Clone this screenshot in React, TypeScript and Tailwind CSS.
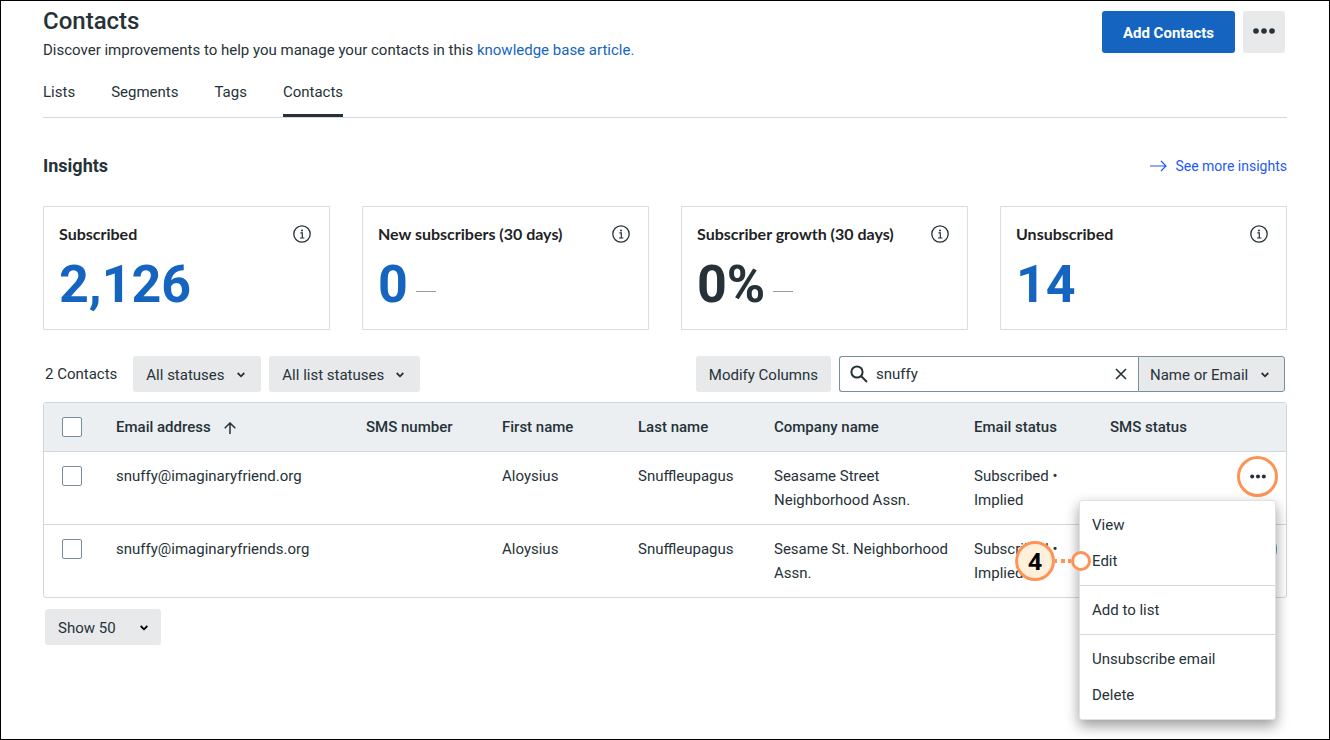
import type { ReactNode } from "react";
import clsx from "clsx";

interface Stat {
  title: string;
  value: string;
  trend?: boolean;
  dark?: boolean;
}

interface Contact {
  email: string;
  firstName: string;
  lastName: string;
  company: string;
}

const tabs = ["Lists", "Segments", "Tags", "Contacts"];

const stats: Stat[] = [
  { title: "Subscribed", value: "2,126" },
  { title: "New subscribers (30 days)", value: "0", trend: true },
  { title: "Subscriber growth (30 days)", value: "0%", trend: true, dark: true },
  { title: "Unsubscribed", value: "14" },
];

const contacts: Contact[] = [
  {
    email: "snuffy@imaginaryfriend.org",
    firstName: "Aloysius",
    lastName: "Snuffleupagus",
    company: "Seasame Street Neighborhood Assn.",
  },
  {
    email: "snuffy@imaginaryfriends.org",
    firstName: "Aloysius",
    lastName: "Snuffleupagus",
    company: "Sesame St. Neighborhood Assn.",
  },
];

const menuGroups = [["View", "Edit"], ["Add to list"], ["Unsubscribe email", "Delete"]];

const Dots = ({ className }: { className: string }) => (
  <svg viewBox="0 0 22 6" fill="currentColor" className={className} aria-hidden="true">
    <circle cx="3" cy="3" r="2.8" />
    <circle cx="11" cy="3" r="2.8" />
    <circle cx="19" cy="3" r="2.8" />
  </svg>
);

const InfoIcon = () => (
  <svg viewBox="0 0 18 18" fill="none" stroke="currentColor" className="size-[18px]" aria-hidden="true">
    <circle cx="9" cy="9" r="8.2" strokeWidth="1.3" />
    <path d="M7.4 7.9h1.9v5M7 13h4.4" strokeWidth="1.2" />
    <circle cx="9" cy="5.4" r="1" fill="currentColor" stroke="none" />
  </svg>
);

interface DropdownProps {
  label: string;
  value: string;
  className?: string;
  selectClassName?: string;
  iconClassName?: string;
}

const Dropdown = ({ label, value, className, selectClassName, iconClassName }: DropdownProps) => (
  <div className={clsx("relative", className)}>
    <select
      aria-label={label}
      className={clsx("h-9 w-full appearance-none bg-[#e8e9eb] pt-px", selectClassName)}
    >
      <option>{value}</option>
    </select>
    <svg
      viewBox="0 0 8 6"
      fill="none"
      stroke="currentColor"
      strokeWidth="1.8"
      className={clsx("pointer-events-none absolute top-4 h-[6px] w-2", iconClassName)}
      aria-hidden="true"
    >
      <path d="M0.7 1l3.3 3.3L7.3 1" />
    </svg>
  </div>
);

const StatCard = ({ title, value, trend, dark }: Stat) => (
  <section className="border border-[#dcdddf] px-[15px] pt-[15px] pb-[14px]">
    <div className="flex h-6 items-center justify-between pr-[3px]">
      <h3 className="font-['Lato'] text-base leading-6 font-bold text-[#1f2326]">{title}</h3>
      <button type="button" aria-label={`About ${title}`}>
        <InfoIcon />
      </button>
    </div>
    <div className="mt-[9px] flex items-center gap-2">
      <span className={clsx("text-[52px] leading-[60px] font-bold", dark ? "text-[#263238]" : "text-[#1565c0]")}>
        {value}
      </span>
      {trend && <span className="mt-3 h-px w-5 bg-[#9a9a9a]" />}
    </div>
  </section>
);

/* Numbered callout that points at a menu item */
const Callout = ({ step }: { step: number }) => (
  <div className="pointer-events-none absolute top-1/2 right-[184px] flex -translate-y-1/2 items-center">
    <span className="flex size-10 items-center justify-center rounded-full border-[3px] border-[#ff9356] bg-[#fff0dc] font-['Noto_Sans'] text-2xl font-bold text-black">
      {step}
    </span>
    <svg viewBox="0 0 16 4" className="h-1 w-4" fill="#ff9356" aria-hidden="true">
      <path d="M0 0h2v4H0zM6 0h4v4H6zM13 0h3v4h-3z" />
    </svg>
    <span className="size-5 rounded-full border-[3px] border-[#ff9356] bg-white" />
  </div>
);

const RowMenu = () => (
  <div
    role="menu"
    className="absolute top-12 right-[10px] z-10 w-[197px] rounded-[3px] border border-[#dfe1e3] bg-white shadow-[0_6px_14px_rgba(0,0,0,0.4)]"
  >
    {menuGroups.map((group) => (
      <div key={group[0]} className="border-[#cfd8dc] py-[6px] not-first:border-t">
        {group.map((item) => (
          <div key={item} className="relative">
            <button type="button" role="menuitem" className="block h-9 w-full px-3 text-left">
              {item}
            </button>
            {item === "Edit" && <Callout step={4} />}
          </div>
        ))}
      </div>
    ))}
  </div>
);

const Th = ({ children, className }: { children?: ReactNode; className?: string }) => (
  <th className={clsx("bg-[#ebeff2] px-3 py-3 text-left align-top font-medium", className)}>{children}</th>
);

const Td = ({ children, className }: { children?: ReactNode; className?: string }) => (
  <td className={clsx("border-t border-[#cfd8dc] px-3 py-3 align-top", className)}>{children}</td>
);

const RowCheckbox = ({ label }: { label: string }) => (
  <input
    type="checkbox"
    aria-label={label}
    className="mx-[6px] mt-[2px] block size-5 appearance-none rounded-[2px] border border-[#78909c] bg-white"
  />
);

const ContactsTable = () => (
  <div className="mt-[10px] rounded-[3px] border border-[#cfd8dc]">
    <table className="w-full table-fixed border-separate border-spacing-0">
      <colgroup>
        <col className="w-[60px]" />
        <col />
        <col className="w-[136px]" />
        <col className="w-[136px]" />
        <col className="w-[136px]" />
        <col className="w-[200px]" />
        <col className="w-[136px]" />
        <col className="w-[136px]" />
        <col className="w-[52px]" />
      </colgroup>
      <thead>
        <tr>
          <Th className="rounded-tl-[2px]">
            <RowCheckbox label="Select all contacts" />
          </Th>
          <Th>
            <button type="button" className="flex items-center gap-[13px]">
              Email address
              <svg
                viewBox="0 0 12 12"
                fill="none"
                stroke="currentColor"
                strokeWidth="1.5"
                className="mt-[2px] size-3"
                aria-hidden="true"
              >
                <path d="M6 12V1M0.7 6.3L6 1l5.3 5.3" />
              </svg>
            </button>
          </Th>
          <Th>SMS number</Th>
          <Th>First name</Th>
          <Th>Last name</Th>
          <Th>Company name</Th>
          <Th>Email status</Th>
          <Th>SMS status</Th>
          <Th className="rounded-tr-[2px]" />
        </tr>
      </thead>
      <tbody>
        {contacts.map((contact, i) => (
          <tr key={contact.email}>
            <Td>
              <RowCheckbox label={`Select ${contact.email}`} />
            </Td>
            <Td>{contact.email}</Td>
            <Td />
            <Td>{contact.firstName}</Td>
            <Td>{contact.lastName}</Td>
            <Td>{contact.company}</Td>
            <Td>Subscribed • Implied</Td>
            <Td />
            <Td className="relative">
              <button
                type="button"
                aria-label={`Actions for ${contact.email}`}
                className={clsx(
                  "absolute flex items-center justify-center rounded-full",
                  i === 0
                    ? "top-1 left-[3px] size-[41px] border-[3px] border-[#ff9356]"
                    : "top-[5px] left-[5px] size-[38px] bg-[#4f97bd]",
                )}
              >
                <Dots className="h-[5px] w-4" />
              </button>
              {i === 0 && <RowMenu />}
            </Td>
          </tr>
        ))}
      </tbody>
    </table>
  </div>
);

export default function App() {
  return (
    <main className="min-h-screen border border-black bg-white px-[42px] pt-2 font-['Roboto',sans-serif] text-[15px] leading-6 text-[#263238]">
      <header className="flex items-start justify-between">
        <div>
          <h1 className="text-2xl leading-6 font-medium">Contacts</h1>
          <p className="mt-[5px]">
            Discover improvements to help you manage your contacts in this{" "}
            <a href="#" className="text-[#1565c0]">
              knowledge base article.
            </a>
          </p>
        </div>
        <div className="mt-[2px] mr-[2px] flex gap-2">
          <button type="button" className="h-[42px] rounded-[3px] bg-[#1565c0] px-[21px] pt-[2px] font-bold text-white">
            Add Contacts
          </button>
          <button
            type="button"
            aria-label="More actions"
            className="flex size-[42px] items-center justify-center rounded-[3px] bg-[#e8e9eb] pb-[2px]"
          >
            <Dots className="h-[6px] w-[22px]" />
          </button>
        </div>
      </header>

      <nav className="mt-[18px] flex gap-9 border-b border-[#cfd8dc]">
        {tabs.map((tab) => (
          <a
            key={tab}
            href="#"
            className={clsx("border-b-[3px] pb-[10px]", tab === "Contacts" ? "border-[#263238]" : "border-transparent")}
          >
            {tab}
          </a>
        ))}
      </nav>

      <div className="mt-9 flex items-center justify-between">
        <h2 className="text-lg leading-6 font-bold">Insights</h2>
        <a href="#" className="flex items-center gap-2 text-[14px] text-[#1f5af0]">
          <svg
            viewBox="0 0 17 12"
            fill="none"
            stroke="currentColor"
            strokeWidth="1.2"
            className="h-3 w-[17px]"
            aria-hidden="true"
          >
            <path d="M0 6h16M11 1l5 5-5 5" />
          </svg>
          See more insights
        </a>
      </div>

      <div className="mt-7 grid grid-cols-4 gap-8">
        {stats.map((stat) => (
          <StatCard key={stat.title} {...stat} />
        ))}
      </div>

      <div className="mt-[26px] flex items-center justify-between px-[2px]">
        <div className="flex items-center">
          <span className="mr-4">2 Contacts</span>
          <Dropdown
            label="Status"
            value="All statuses"
            className="mr-2"
            selectClassName="rounded-[3px] pr-9 pl-[13px]"
            iconClassName="right-4"
          />
          <Dropdown
            label="List status"
            value="All list statuses"
            selectClassName="rounded-[3px] pr-9 pl-[13px]"
            iconClassName="right-4"
          />
        </div>
        <div className="flex">
          <button type="button" className="mr-2 h-9 rounded-[3px] bg-[#e8e9eb] px-[13px] pt-px">
            Modify Columns
          </button>
          <div className="flex h-9 w-[299px] items-center rounded-l-[3px] border border-r-0 border-[#78909c] pr-[11px] pl-[10px]">
            <svg
              viewBox="0 0 18 18"
              fill="none"
              stroke="currentColor"
              strokeWidth="2"
              className="size-[18px] shrink-0"
              aria-hidden="true"
            >
              <circle cx="7" cy="7" r="5.6" />
              <path d="M11 11l6 6" />
            </svg>
            <input
              type="text"
              aria-label="Search contacts"
              defaultValue="snuffy"
              className="mx-2 min-w-0 flex-1 outline-none"
            />
            <button type="button" aria-label="Clear search">
              <svg
                viewBox="0 0 12 12"
                fill="none"
                stroke="currentColor"
                strokeWidth="1.6"
                className="size-3"
                aria-hidden="true"
              >
                <path d="M1 1l10 10M11 1L1 11" />
              </svg>
            </button>
          </div>
          <Dropdown
            label="Search by"
            value="Name or Email"
            selectClassName="rounded-r-[3px] border border-[#78909c] pr-[35px] pl-[11px]"
            iconClassName="right-4"
          />
        </div>
      </div>

      <ContactsTable />

      <Dropdown
        label="Rows per page"
        value="Show 50"
        className="mt-[11px] ml-[2px] w-[116px]"
        selectClassName="rounded-[3px] pl-[13px]"
        iconClassName="right-[13px] text-black"
      />
    </main>
  );
}
